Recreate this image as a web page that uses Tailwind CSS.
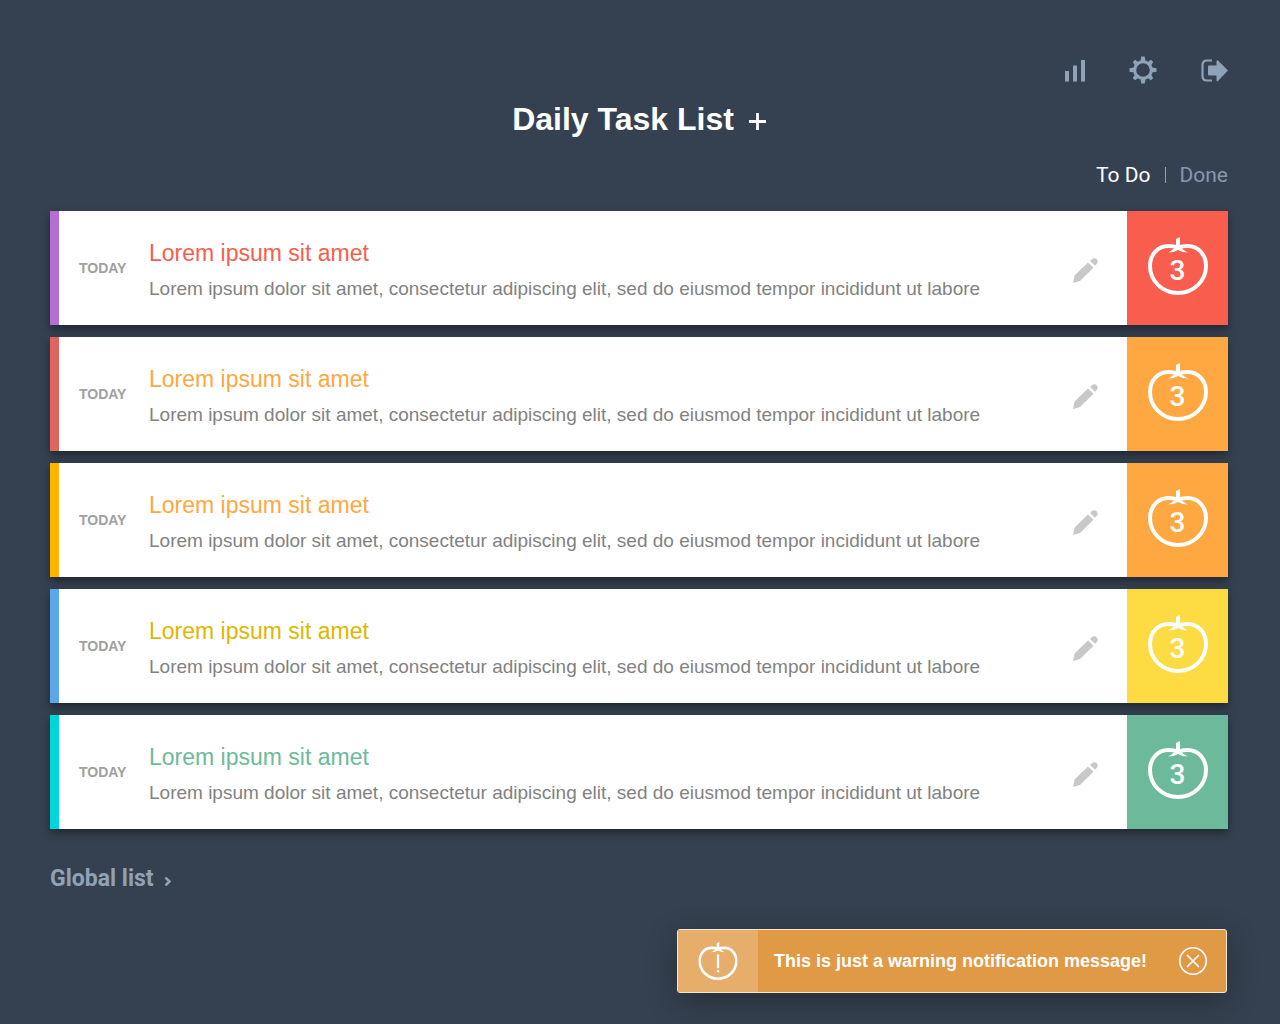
<!DOCTYPE html>
<html lang="en">
<head>
<meta charset="utf-8">
<meta name="viewport" content="width=device-width, initial-scale=1">
<title>Daily Task List</title>
<script src="https://cdn.jsdelivr.net/npm/@tailwindcss/browser@4"></script>
</head>
<body class="min-h-screen bg-[#354150] font-['Liberation_Sans',Arial,sans-serif] text-white">

<svg class="hidden" aria-hidden="true">
  <symbol id="tomato" viewBox="0 0 60 58">
    <path d="M30 10.500C27 9.300 24 9 20.500 9C10 9 2 17.500 2 29C2 44 14.500 56 30 56C45.500 56 58 44 58 29C58 17.500 50 9 39.500 9C36 9 33 9.300 30 10.500Z" fill="none" stroke="currentColor" stroke-width="4"/>
    <path d="M28 2L32 0V8Q34 13 40 15.500Q34 15.500 30 13Q26 15.500 20 15.500Q26 13 28 8Z" fill="currentColor"/>
  </symbol>
  <symbol id="pencil" viewBox="0 0 25 25">
    <path d="M0 25L1.500 18Q2 17 3 16L15 4.500L20.500 9.800L8 22Q7 23.200 5.500 23.500Z" fill="currentColor"/>
    <path d="M17 3L19 1Q20.500 0 22 0.300Q24.500 1 24.700 3.500Q24.800 5 23.500 6.300L22 7.800Z" fill="currentColor"/>
  </symbol>
</svg>

<div class="flex min-h-screen flex-col pt-14 pr-[52px] pb-8 pl-[50px]">
  <header class="flex flex-col">
    <nav class="flex items-center justify-end gap-11 text-[#8fa2b7]" aria-label="Main">
      <a href="#stats" aria-label="Statistics">
        <svg class="h-7 w-5" viewBox="0 0 20 28" fill="currentColor"><path d="M0 15h4v10.500H0zM8 9.500h4v16H8zM16 4h4v21.500h-4z"/></svg>
      </a>
      <a href="#settings" aria-label="Settings">
        <svg class="size-7" viewBox="-14 -14 28 28" fill="currentColor">
          <circle r="8.300" fill="none" stroke="currentColor" stroke-width="3"/>
          <g id="teeth"><path d="M-2.600-9L-1.700-13.500H1.700L2.600-9zM-2.600 9L-1.700 13.500H1.700L2.600 9zM-9-2.600L-13.500-1.700V1.700L-9 2.600zM9-2.600L13.500-1.700V1.700L9 2.600z"/></g>
          <use href="#teeth" transform="rotate(45) scale(0.950)"/>
        </svg>
      </a>
      <a href="#logout" aria-label="Log out">
        <svg class="h-7 w-[27px]" viewBox="0 0 27 28"><path d="M11 4.500H6Q1.500 4.500 1.500 9V20Q1.500 24.500 6 24.500H11" fill="none" stroke="currentColor" stroke-width="2.200"/><path d="M8 9.500h7.500V5Q16 4 17 4.500L26.500 14Q27 14.500 26.500 15L17 25Q15.500 25.500 15.500 24.500V19.500H8Q7 19.500 7 18.500V10.500Q7 9.500 8 9.500Z" fill="currentColor"/></svg>
      </a>
    </nav>
    <div class="mt-[15px] flex items-center justify-center gap-[15px]">
      <h1 class="text-[32px] leading-10 font-bold">Daily Task List</h1>
      <button type="button" aria-label="Add task"><svg class="mt-1 size-[17px]" viewBox="0 0 17 17"><path d="M8.500 0V17M0 8.500H17" stroke="currentColor" stroke-width="2.800"/></svg></button>
    </div>
    <nav class="mt-[22px] flex items-center justify-end font-[Roboto,sans-serif] text-[21px] leading-7" aria-label="Task state">
      <a href="#todo">To Do</a>
      <span class="mx-3.5 h-4 w-px bg-[#8fa2b7]"></span>
      <a href="#done" class="text-[#8798ae]">Done</a>
    </nav>
  </header>

  <main>
    <ul id="tasks" class="mt-[22px] flex flex-col gap-3"></ul>
    <a href="#global" class="mt-9 inline-flex items-center gap-2.5 font-[Roboto,sans-serif] text-[23px] leading-7 font-bold text-[#8fa2b7]">Global list
      <svg class="mt-1 h-[9px] w-[7px]" viewBox="0 0 7 9"><path d="M1.500 0.500L5.500 4.500L1.500 8.500" fill="none" stroke="currentColor" stroke-width="2.500"/></svg>
    </a>
  </main>

  <aside role="alert" class="mt-9 mr-px flex h-16 w-full max-w-[550px] items-stretch self-end overflow-hidden rounded-[3px] border border-[#f5e6d3] bg-[#e09a45] shadow-[0_8px_30px_rgba(0,0,0,0.28)]">
    <div class="flex w-20 shrink-0 items-center justify-center bg-[#e7ad6a]">
      <svg class="h-[38px] w-10" viewBox="0 0 60 58"><use href="#tomato"/><path d="M30 19V40M30 43V46" stroke="currentColor" stroke-width="3.500"/></svg>
    </div>
    <p class="flex flex-1 items-center pl-4 text-lg font-bold">This is just a warning notification message!</p>
    <button type="button" aria-label="Close" class="mr-[19px]"><svg class="size-7" viewBox="0 0 28 28" fill="none" stroke="currentColor"><circle cx="14" cy="14" r="13.200" stroke-width="1.600"/><path d="M8.500 8.500L19.500 19.500M19.500 8.500L8.500 19.500" stroke-width="1.700" stroke-linecap="round"/></svg></button>
  </aside>
</div>

<script>
  const tasks = [
    { bar: '#b56fd3', title: '#f95d4d', tile: '#f95d4d' },
    { bar: '#e0655f', title: '#ffa741', tile: '#ffa741' },
    { bar: '#ffb400', title: '#ffa741', tile: '#ffa741' },
    { bar: '#5aa9e6', title: '#e0b600', tile: '#fddc43' },
    { bar: '#00d5da', title: '#6cba9b', tile: '#6cba9b' },
  ];
  document.getElementById('tasks').innerHTML = tasks.map(t => `
    <li class="flex min-h-[114px] items-stretch bg-white shadow-[0_4px_8px_rgba(0,0,0,0.4)]">
      <span class="w-[9px] shrink-0" style="background:${t.bar}"></span>
      <span class="ml-5 w-[70px] shrink-0 self-center text-sm font-bold text-[#a0a0a0]">TODAY</span>
      <div class="flex min-w-0 flex-1 flex-col justify-center gap-1.5 pt-1">
        <h2 class="text-[23px] leading-8" style="color:${t.title}">Lorem ipsum sit amet</h2>
        <p class="text-[19px] leading-7 text-[#828282]">Lorem ipsum dolor sit amet, consectetur adipiscing elit, sed do eiusmod tempor incididunt ut labore</p>
      </div>
      <button type="button" aria-label="Edit task" class="mx-[29px] mt-1 shrink-0 self-center text-[#c8c8c8]"><svg class="size-[25px]"><use href="#pencil"/></svg></button>
      <div class="grid w-[101px] shrink-0 place-items-center" style="background:${t.tile}">
        <svg class="col-start-1 row-start-1 mb-1 h-[58px] w-[60px]"><use href="#tomato"/></svg>
        <span class="col-start-1 row-start-1 pt-1.5 font-[Roboto,sans-serif] text-[28px] leading-8 font-medium">3</span>
      </div>
    </li>`).join('');
</script>
</body>
</html>
